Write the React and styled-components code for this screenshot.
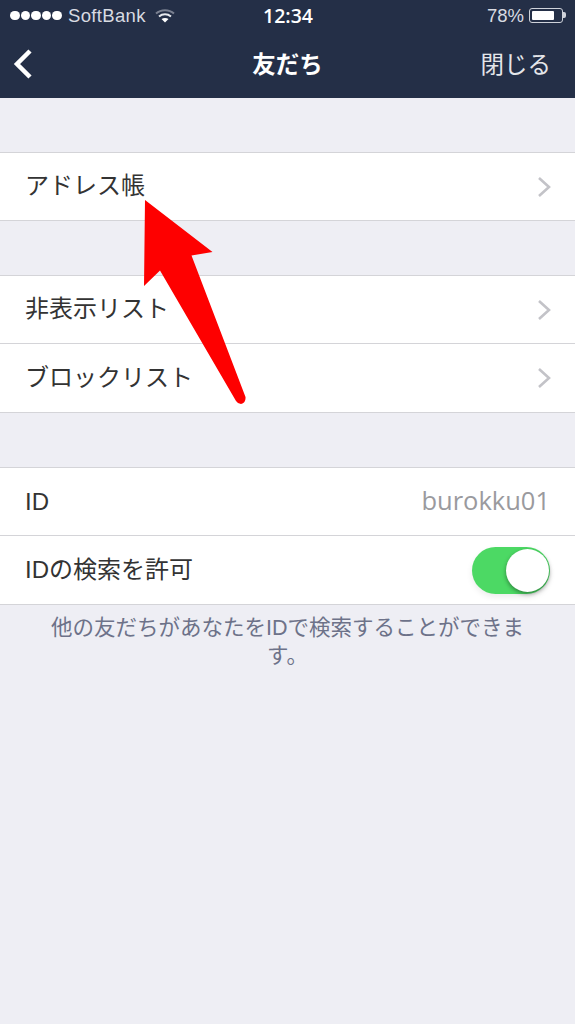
import React from "react";
import styled, { createGlobalStyle } from "styled-components";

const GlobalStyle = createGlobalStyle`
  html, body {
    margin: 0;
    padding: 0;
    background: #eeeef4;
  }
  * {
    box-sizing: border-box;
  }
`;

const Screen = styled.div`
  position: relative;
  width: 575px;
  height: 1024px;
  overflow: hidden;
  background: #eeeef4;
  font-family: "Liberation Sans", "Noto Sans CJK JP", sans-serif;
  color: #333;
`;

const Header = styled.header`
  height: 98px;
  background: #242f47;
  color: #fff;
`;

const StatusBar = styled.div`
  height: 31px;
  padding: 0 10px;
  display: grid;
  grid-template-columns: 1fr auto 1fr;
  align-items: center;
  font-size: 18.5px;
`;

const StatusLeft = styled.div`
  display: flex;
  align-items: center;
  color: #d8dbe2;
  letter-spacing: 0.35px;
`;

const Dots = styled.div`
  display: flex;
  gap: 1px;
  margin-right: 6px;
`;

const Dot = styled.span`
  width: 9.6px;
  height: 9.6px;
  border-radius: 50%;
  background: #fff;
`;

const Time = styled.div`
  font-family: "Open Sans", "Liberation Sans", sans-serif;
  font-weight: 600;
  font-size: 19.5px;
  margin-left: 1px;
  color: #fff;
`;

const StatusRight = styled.div`
  display: flex;
  align-items: center;
  justify-content: flex-end;
  gap: 5px;
  color: #d8dbe2;
`;

const Battery = styled.div`
  position: relative;
  width: 34px;
  height: 15px;
  padding: 2px;
  border: 1px solid #cfd2da;
  border-radius: 3px;
  margin-right: 2px;

  &::after {
    content: "";
    position: absolute;
    right: -4px;
    top: 3px;
    width: 3px;
    height: 6px;
    border-radius: 0 2px 2px 0;
    background: #cfd2da;
  }
`;

const BatteryLevel = styled.div`
  height: 100%;
  background: #fff;
  border-radius: 1px;
`;

const NavBar = styled.nav`
  height: 67px;
  padding: 0 24px 1px 25px;
  display: grid;
  grid-template-columns: 1fr auto 1fr;
  align-items: center;
`;

const BackIcon = styled.svg`
  margin-left: -12px;
  fill: none;
  stroke: #fff;
  stroke-width: 4.5;
`;

const Title = styled.div`
  font-size: 23.5px;
  font-weight: 700;
  padding: 0 1px 2px 0;
`;

const CloseButton = styled.div`
  justify-self: end;
  font-size: 23.5px;
  padding-bottom: 2px;
  color: #e4e6ea;
`;

const Content = styled.main`
  padding-top: 54px;
  display: flex;
  flex-direction: column;
  gap: 54px;
`;

const Group = styled.section`
  background: #fff;
  border-top: 1px solid #d4d4d8;
  border-bottom: 1px solid #d4d4d8;
`;

const Row = styled.div`
  height: 67px;
  padding: 0 23px 0 25px;
  display: flex;
  align-items: center;
  justify-content: space-between;
  font-size: 24px;
  color: #333;

  & + & {
    height: 69px;
    border-top: 1px solid #d4d4d8;
  }
`;

const RowLabel = styled.span`
  padding-bottom: ${(props) => (props.$latin ? "0" : "6px")};
`;

const RowValue = styled.span`
  color: #9a9a9e;
  font-family: "Open Sans", "Liberation Sans", sans-serif;
  font-size: 25.5px;
  margin-right: 2px;
  padding-bottom: 4px;
`;

const Toggle = styled.div`
  width: 78px;
  height: 47px;
  padding: 2px 1px;
  border-radius: 24px;
  background: #4cd964;
  display: flex;
  justify-content: flex-end;
  margin-right: 2px;
  box-shadow: 0 3px 6px rgba(0, 0, 0, 0.08);
`;

const Knob = styled.div`
  width: 43px;
  height: 43px;
  border-radius: 50%;
  background: #fff;
  box-shadow: 0 2px 4px rgba(0, 0, 0, 0.4);
`;

const Note = styled.p`
  margin: 9px 40px 0;
  text-align: center;
  font-size: 21.5px;
  line-height: 28px;
  color: #6d7289;
`;

const Section = styled.div`
  display: flex;
  flex-direction: column;
`;

const ArrowOverlay = styled.svg`
  position: absolute;
  left: 0;
  top: 0;
  pointer-events: none;
`;

const ChevronIcon = styled.svg`
  width: 16px;
  height: 22px;
  fill: none;
  stroke: #c3c3c8;
  stroke-width: 2.6;
`;

function Chevron() {
  return (
    <ChevronIcon viewBox="0 0 16 22">
      <path d="M3 2l10 9-10 9" />
    </ChevronIcon>
  );
}

function WifiIcon() {
  return (
    <svg width="20" height="16" viewBox="0 0 20 16" style={{ marginLeft: 9 }}>
      <path d="M1 5.500C6 1 14 1 19 5.500" fill="none" stroke="#7b8191" strokeWidth="2" />
      <path d="M4 8.500C7.500 5.500 12.500 5.500 16 8.500" fill="none" stroke="#e8eaee" strokeWidth="2" />
      <path d="M10 14.500l-3.500-3.500C8.500 9.500 11.500 9.500 13.500 11z" fill="#fff" />
    </svg>
  );
}

export default function App() {
  return (
    <Screen>
      <GlobalStyle />
      <Header>
        <StatusBar>
          <StatusLeft>
            <Dots>
              {[0, 1, 2, 3, 4].map((i) => (
                <Dot key={i} />
              ))}
            </Dots>
            SoftBank
            <WifiIcon />
          </StatusLeft>
          <Time>12:34</Time>
          <StatusRight>
            78%
            <Battery>
              <BatteryLevel style={{ width: "78%" }} />
            </Battery>
          </StatusRight>
        </StatusBar>
        <NavBar>
          <BackIcon width="20" height="32" viewBox="0 0 20 32">
            <path d="M17 3L4 16l13 13" />
          </BackIcon>
          <Title>友だち</Title>
          <CloseButton>閉じる</CloseButton>
        </NavBar>
      </Header>
      <Content>
        <Group>
          <Row>
            <RowLabel>アドレス帳</RowLabel>
            <Chevron />
          </Row>
        </Group>
        <Group>
          <Row>
            <RowLabel>非表示リスト</RowLabel>
            <Chevron />
          </Row>
          <Row>
            <RowLabel>ブロックリスト</RowLabel>
            <Chevron />
          </Row>
        </Group>
        <Section>
          <Group>
            <Row>
              <RowLabel $latin>ID</RowLabel>
              <RowValue>burokku01</RowValue>
            </Row>
            <Row>
              <RowLabel>IDの検索を許可</RowLabel>
              <Toggle>
                <Knob />
              </Toggle>
            </Row>
          </Group>
          <Note>他の友だちがあなたをIDで検索することができます。</Note>
        </Section>
      </Content>
      <ArrowOverlay width="575" height="1024" viewBox="0 0 575 1024">
        <path
          d="M145 200L212.500 252L191.500 255.500L245.500 397Q246 403 241 404Q238 404 236 401L160 270.500L144 286Z"
          fill="#fe0000"
        />
      </ArrowOverlay>
    </Screen>
  );
}
